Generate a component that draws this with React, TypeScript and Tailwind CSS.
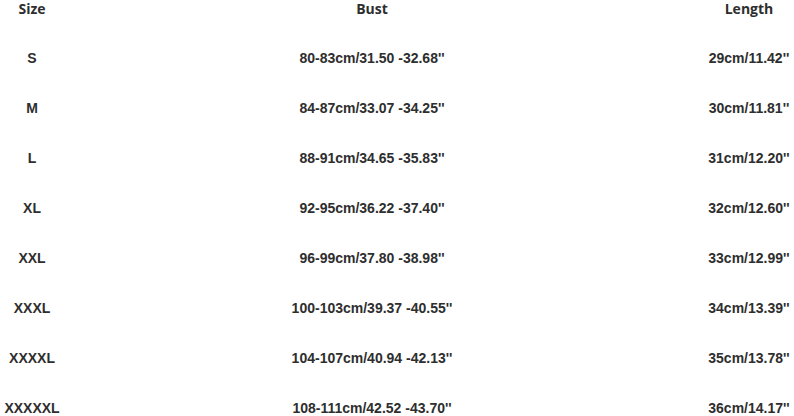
import React from 'react';

interface SizeRow {
  size: string;
  bust: string;
  length: string;
}

const rows: SizeRow[] = [
  { size: 'S', bust: "80-83cm/31.50 -32.68''", length: "29cm/11.42''" },
  { size: 'M', bust: "84-87cm/33.07 -34.25''", length: "30cm/11.81''" },
  { size: 'L', bust: "88-91cm/34.65 -35.83''", length: "31cm/12.20''" },
  { size: 'XL', bust: "92-95cm/36.22 -37.40''", length: "32cm/12.60''" },
  { size: 'XXL', bust: "96-99cm/37.80 -38.98''", length: "33cm/12.99''" },
  { size: 'XXXL', bust: "100-103cm/39.37 -40.55''", length: "34cm/13.39''" },
  { size: 'XXXXL', bust: "104-107cm/40.94 -42.13''", length: "35cm/13.78''" },
  { size: 'XXXXXL', bust: "108-111cm/42.52 -43.70''", length: "36cm/14.17''" },
];

const cols = 'grid grid-cols-[64px_616px_1fr]';

const App: React.FC = () => {
  return (
    <div className="w-[794px] h-[416px] overflow-hidden bg-white text-[#2e2e2e]">
      <div className={`${cols} h-[17px] font-['Open_Sans',sans-serif] font-bold text-[14px] leading-[17px]`}>
        <div className="text-center">Size</div>
        <div className="text-center">Bust</div>
        <div className="text-center pl-6">Length</div>
      </div>

      <div className="mt-[16px] font-['Liberation_Sans',Arial,sans-serif] font-bold text-[14px]">
        {rows.map(row => (
          <div key={row.size} className={`${cols} h-[50px] items-center`}>
            <div className="text-center">{row.size}</div>
            <div className="text-center">{row.bust}</div>
            <div className="text-center pl-6">{row.length}</div>
          </div>
        ))}
      </div>
    </div>
  );
};

export default App;
